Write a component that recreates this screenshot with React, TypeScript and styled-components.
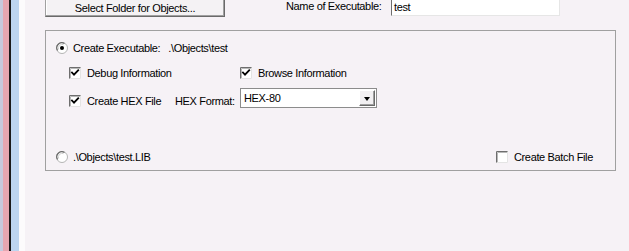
import React from "react";
import styled, { createGlobalStyle } from "styled-components";

const Global = createGlobalStyle`
  html, body { margin: 0; padding: 0; }
  body {
    background: #f6f2f6;
    font-family: "Liberation Sans", Arial, sans-serif;
    font-size: 11px;
    letter-spacing: -0.35px;
    color: #000;
    overflow: hidden;
  }
`;

const Page = styled.div`
  display: flex;
  height: 251px;
  width: 629px;
  overflow: hidden;
`;

const Strip = styled.div`
  flex: 0 0 25px;
  height: 100%;
  background: linear-gradient(
    to right,
    #c6c9dc 0px, #c6c9dc 3px,
    #e6a6b0 3px, #e6a6b0 9px,
    #1a1a1a 9px, #1a1a1a 11px,
    #bdd5f0 11px, #bdd5f0 19px,
    #fcfbfc 19px, #fcfbfc 25px
  );
`;

const Content = styled.div`
  display: flex;
  flex-direction: column;
  padding-left: 20px;
`;

const TopRow = styled.div`
  display: flex;
  align-items: flex-start;
  margin-top: -5px;
  height: 22px;
`;

const Button = styled.div`
  box-sizing: border-box;
  width: 180px;
  height: 22px;
  display: flex;
  align-items: center;
  justify-content: center;
  padding-top: 3px;
  background: #f4f2f4;
  border-left: 1px solid #a0a0a0;
  border-top: 1px solid #a0a0a0;
  border-right: 1px solid #6a6a6a;
  border-bottom: 1px solid #6a6a6a;
  box-shadow: inset -1px -1px 0 #a0a0a0, inset 1px 1px 0 #ffffff;
`;

const Label = styled.span<{ $ml?: number; $w?: number }>`
  display: inline-block;
  line-height: 14px;
  white-space: nowrap;
  margin-left: ${(p) => p.$ml ?? 0}px;
  ${(p) => (p.$w ? `width: ${p.$w}px;` : "")}
`;

const TopLabel = styled(Label)`
  margin-top: 4px;
  width: 95px;
`;

const TextInput = styled.div`
  box-sizing: border-box;
  width: 169px;
  height: 21px;
  margin-left: 10px;
  padding: 5px 0 0 2px;
  line-height: 12px;
  background: #fff;
  border-left: 1px solid #6e6e6e;
  border-top: 1px solid #6e6e6e;
  border-right: 1px solid #e6e6e6;
  border-bottom: 1px solid #e6e6e6;
`;

const GroupBox = styled.div`
  box-sizing: border-box;
  width: 571px;
  height: 141px;
  margin-top: 13px;
  border: 1px solid #a0a0a0;
  padding: 10px 22px 6px 10px;
  display: flex;
  flex-direction: column;
`;

const Row = styled.div<{ $mt?: number; $indent?: number; $h?: number }>`
  display: flex;
  align-items: center;
  height: ${(p) => p.$h ?? 14}px;
  margin-top: ${(p) => p.$mt ?? 0}px;
  padding-left: ${(p) => p.$indent ?? 0}px;
`;

const BottomRow = styled(Row)`
  margin-top: auto;
`;

const Option = styled.div<{ $w?: number; $push?: boolean; $gap?: number }>`
  display: flex;
  align-items: center;
  gap: ${(p) => p.$gap ?? 6}px;
  line-height: 14px;
  white-space: nowrap;
  ${(p) => (p.$w ? `width: ${p.$w}px;` : "")}
  ${(p) => (p.$push ? "margin-left: auto;" : "")}
`;

const BottomAligned = styled.div`
  display: flex;
  align-self: flex-end;
  align-items: center;
`;

const Select = styled.div`
  box-sizing: border-box;
  width: 137px;
  height: 20px;
  display: flex;
  align-items: center;
  background: #fff;
  border: 1px solid #8c8c8c;
  padding: 1px 1px 1px 3px;
`;

const SelectText = styled.span`
  flex: 1;
  line-height: 14px;
`;

const DropButton = styled.div`
  box-sizing: border-box;
  width: 16px;
  height: 16px;
  display: flex;
  align-items: center;
  justify-content: center;
  background: #f2f0f2;
  border-left: 1px solid #ffffff;
  border-top: 1px solid #ffffff;
  border-right: 1px solid #6a6a6a;
  border-bottom: 1px solid #6a6a6a;
  box-shadow: inset -1px -1px 0 #a0a0a0;
`;

const Arrow = styled.span`
  width: 0;
  height: 0;
  border-left: 3.5px solid transparent;
  border-right: 3.5px solid transparent;
  border-top: 4px solid #000;
  margin-top: 1px;
`;

const BoxIcon = styled.svg`
  flex: 0 0 auto;
  display: block;
`;

function Radio({ checked }: { checked?: boolean }) {
  return (
    <BoxIcon width="12" height="12" viewBox="0 0 12 12">
      <circle cx="6" cy="6" r="5.5" fill="#fff" stroke="#b4b4b4" strokeWidth="1" />
      <path d="M1.6 8.5 A5 5 0 0 1 8.5 1.6" fill="none" stroke="#6a6a6a" strokeWidth="1.2" />
      <path d="M2.6 7.5 A3.8 3.8 0 0 1 7.5 2.6" fill="none" stroke="#d0d0d0" strokeWidth="1" />
      {checked && <circle cx="6" cy="6" r="2" fill="#000" />}
    </BoxIcon>
  );
}

function Check({ checked }: { checked?: boolean }) {
  return (
    <BoxIcon width="12" height="12" viewBox="0 0 12 12">
      <rect x="0" y="0" width="12" height="12" fill="#fff" />
      <path d="M0.5 12 V0.5 H12" fill="none" stroke="#6e6e6e" strokeWidth="1" />
      <path d="M1.5 11 V1.5 H11" fill="none" stroke="#b8b8b8" strokeWidth="1" />
      <path d="M11.5 0.5 V11.5 H0.5" fill="none" stroke="#e4e4e4" strokeWidth="1" />
      {checked && (
        <path d="M3 5.6 L5 7.6 L9.2 3.2" fill="none" stroke="#000" strokeWidth="1.8" strokeLinecap="square" />
      )}
    </BoxIcon>
  );
}

export default function App() {
  return (
    <>
      <Global />
      <Page>
        <Strip />
        <Content>
          <TopRow>
            <Button>Select Folder for Objects...</Button>
            <TopLabel $ml={61}>Name of Executable:</TopLabel>
            <TextInput>test</TextInput>
          </TopRow>
          <GroupBox>
            <Row>
              <Option $gap={5}>
                <Radio checked />
                <span>Create Executable:</span>
                <Label $ml={3}>.\Objects\test</Label>
              </Option>
            </Row>
            <Row $mt={11} $indent={13}>
              <Option $w={171}>
                <Check checked />
                <span>Debug Information</span>
              </Option>
              <Option>
                <Check checked />
                <span>Browse Information</span>
              </Option>
            </Row>
            <Row $mt={8} $indent={13} $h={20}>
              <BottomAligned>
                <Option $w={106}>
                  <Check checked />
                  <span>Create HEX File</span>
                </Option>
                <Label $w={65}>HEX Format:</Label>
              </BottomAligned>
              <Select>
                <SelectText>HEX-80</SelectText>
                <DropButton>
                  <Arrow />
                </DropButton>
              </Select>
            </Row>
            <BottomRow>
              <Option $gap={5}>
                <Radio />
                <span>.\Objects\test.LIB</span>
              </Option>
              <Option $push>
                <Check />
                <span>Create Batch File</span>
              </Option>
            </BottomRow>
          </GroupBox>
        </Content>
      </Page>
    </>
  );
}
